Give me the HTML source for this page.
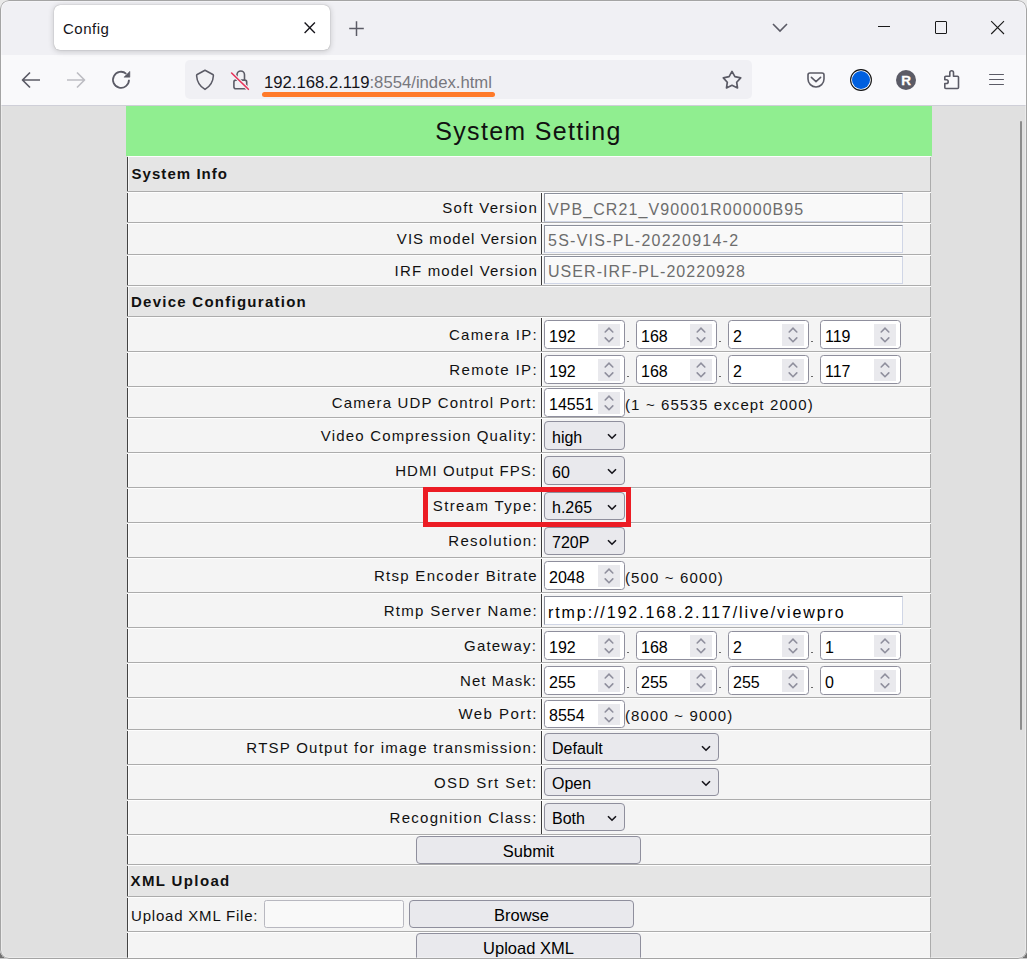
<!DOCTYPE html><html><head><meta charset="utf-8"><style>
html,body{margin:0;padding:0;width:1027px;height:959px;overflow:hidden;background:#e9e9e9;font-family:'Liberation Sans',sans-serif}
#win{position:absolute;left:0;top:0;width:1027px;height:959px;border-radius:9px;overflow:hidden;background:#e0e0e0}
#frame{position:absolute;left:0;top:0;width:1025px;height:957px;border:1px solid #a4a4a4;border-radius:9px;z-index:10;box-shadow:inset 0 0 0 1px rgba(255,255,255,.35)}
svg{position:absolute;overflow:visible}
</style></head><body><div style="position:absolute;left:0;top:948px;width:5px;height:10px;background:#707070"></div><div style="position:absolute;left:1022px;top:948px;width:5px;height:10px;background:#707070"></div><div style="position:absolute;left:0;top:958px;width:1027px;height:1px;background:#c9c9c9"></div><div id="win">
<div style="position:absolute;left:0px;top:0px;width:1027px;height:55px;background:#f0f0f4"></div>
<div style="position:absolute;left:0px;top:55px;width:1027px;height:50px;background:#f9f9fb"></div>
<div style="position:absolute;left:0px;top:105px;width:1027px;height:1px;background:#cfcfd8"></div>
<div style="position:absolute;left:54px;top:5px;width:276px;height:45px;background:#fff;border-radius:6px;box-shadow:0 0 1px rgba(0,0,0,.4),0 1px 6px rgba(0,0,0,.2)"></div>
<div style="position:absolute;top:19px;font-size:15px;line-height:20px;color:#15141a;font-weight:normal;white-space:pre;letter-spacing:0.5px;left:63px;">Config</div>
<svg style="left:303px;top:21px" width="13" height="13" viewBox="0 0 13 13"><path d="M1.6 1.6L11.9 11.9M11.9 1.6L1.6 11.9" stroke="#15141a" stroke-width="1.35" fill="none"/></svg>
<svg style="left:349px;top:21px" width="16" height="16" viewBox="0 0 16 16"><path d="M7.5 0.3V14.9M0.2 7.6H14.8" stroke="#5b5b66" stroke-width="1.5" fill="none"/></svg>
<svg style="left:772px;top:23px" width="17" height="10" viewBox="0 0 17 10"><path d="M1 1L8 8L15 1" stroke="#5b5b66" stroke-width="1.6" fill="none"/></svg>
<div style="position:absolute;left:878px;top:26px;width:12px;height:1px;background:#1a1a1a"></div>
<div style="position:absolute;left:935px;top:21px;width:10px;height:11px;border:1px solid #1a1a1a;border-radius:1px"></div>
<svg style="left:990px;top:20px" width="15" height="15" viewBox="0 0 15 15"><path d="M1.2 1.2L14 14M14 1.2L1.2 14" stroke="#1a1a1a" stroke-width="1.1" fill="none"/></svg>
<svg style="left:21px;top:71px" width="20" height="18" viewBox="0 0 20 18"><path d="M19 9H2.5M9 1.5L1.5 9L9 16.5" stroke="#5b5b66" stroke-width="1.7" fill="none" stroke-linejoin="round"/></svg>
<svg style="left:66px;top:71px" width="20" height="18" viewBox="0 0 20 18"><path d="M1 9H17.5M11 1.5L18.5 9L11 16.5" stroke="#bdbdc3" stroke-width="1.7" fill="none" stroke-linejoin="round"/></svg>
<svg style="left:111px;top:70px" width="21" height="20" viewBox="0 0 21 20"><path d="M18 9.8A8 8 0 1 1 15.3 3.8" stroke="#5b5b66" stroke-width="1.8" fill="none"/><path d="M18.9 1.3L12.9 7.2L18.9 7.2Z" fill="#5b5b66" stroke="#5b5b66" stroke-width=".5" stroke-linejoin="round"/></svg>
<div style="position:absolute;left:185px;top:60px;width:567px;height:39px;background:#f0f0f4;border-radius:5px"></div>
<svg style="left:195px;top:69px" width="20" height="22" viewBox="0 0 20 22"><path d="M10 1.3L2.2 5.5Q1.5 5.9 1.6 6.7C2 13.2 5.2 17.6 10 20.4C14.8 17.6 18 13.2 18.4 6.7Q18.5 5.9 17.8 5.5Z" stroke="#5b5b66" stroke-width="1.55" fill="none" stroke-linejoin="round"/></svg>
<svg style="left:230px;top:69px" width="21" height="22" viewBox="0 0 21 22"><path d="M7 9V5.7A3.75 3.75 0 0 1 14.5 5.7V11.1" stroke="#5b5b66" stroke-width="1.6" fill="none"/><rect x="3.9" y="11.1" width="12.8" height="8.7" rx="2" stroke="#5b5b66" stroke-width="1.6" fill="none"/><path d="M1.6 4L18.4 20.3" stroke="#f0f0f4" stroke-width="3.6"/><path d="M1.6 4L18.4 20.3" stroke="#e8335a" stroke-width="1.6" stroke-linecap="round"/></svg>
<div style="position:absolute;left:264px;top:73px;font-size:16.7px;line-height:20px;white-space:pre;color:#15141a">192.168.2.119<span style="color:#77777d">:8554/index.html</span></div>
<div style="position:absolute;left:262px;top:92px;width:233px;height:5px;background:#ff7a2a;border-radius:3px"></div>
<svg style="left:721px;top:69px" width="22" height="22" viewBox="0 0 22 22"><path d="M11 2.4L13.9 7.6L19.7 8.9L15.7 13.3L16.5 18.9L11 16.3L5.5 18.9L6.3 13.3L2.3 8.9L8.1 7.6Z" stroke="#5b5b66" stroke-width="1.7" fill="none" stroke-linejoin="round"/></svg>
<svg style="left:806px;top:71px" width="20" height="18" viewBox="0 0 20 18"><path d="M4 2H16A2 2 0 0 1 18 4V8A8 8 0 0 1 2 8V4A2 2 0 0 1 4 2Z" stroke="#5b5b66" stroke-width="1.6" fill="none"/><path d="M5.4 6.4L10 10.6L14.6 6.4" stroke="#5b5b66" stroke-width="1.6" fill="none" stroke-linecap="round" stroke-linejoin="round"/></svg>
<svg style="left:850px;top:69px" width="22" height="22" viewBox="0 0 22 22"><circle cx="11" cy="11" r="10.4" stroke="#111" stroke-width="1.1" fill="#fff"/><circle cx="11" cy="11" r="9" fill="#0060df"/></svg>
<div style="position:absolute;left:896px;top:70px;width:20px;height:20px;border-radius:50%;background:#5b5b66"></div>
<div style="position:absolute;left:896px;width:20px;text-align:center;top:71px;font-size:13.5px;line-height:20px;font-weight:bold;color:#fff;-webkit-text-stroke:0.3px #fff">R</div>
<svg style="left:942px;top:69px" width="20" height="22" viewBox="0 0 20 22"><path d="M2.8 10.8V8.3A1 1 0 0 1 3.8 7.3H7.8V3.65A1.85 1.85 0 0 1 11.5 3.65V7.3H15.5A1 1 0 0 1 16.5 8.3V18.5A1 1 0 0 1 15.5 19.5H3.8A1 1 0 0 1 2.8 18.5V14.5H4.35A1.85 1.85 0 0 0 4.35 10.8Z" stroke="#5b5b66" stroke-width="1.6" fill="none" stroke-linejoin="round"/></svg>
<div style="position:absolute;left:989px;top:73.7px;width:14.5px;height:1.6px;background:#5b5b66;border-radius:1px"></div>
<div style="position:absolute;left:989px;top:78.7px;width:14.5px;height:1.6px;background:#5b5b66;border-radius:1px"></div>
<div style="position:absolute;left:989px;top:83.7px;width:14.5px;height:1.6px;background:#5b5b66;border-radius:1px"></div>
<div style="position:absolute;left:0px;top:106px;width:1027px;height:853px;background:#e0e0e0"></div>
<div style="position:absolute;left:1020px;top:121px;width:2px;height:609px;background:#8c8c8c;border-radius:1px"></div>
<div style="position:absolute;left:126px;top:106px;width:806px;height:50px;background:#90ee90"></div>
<div style="position:absolute;left:126px;width:806px;text-align:center;top:116px;font-size:25px;line-height:30px;letter-spacing:1.3px;text-indent:-1px;color:#111">System Setting</div>
<div style="position:absolute;left:127px;top:156px;width:804px;height:35px;background:#e5e5e5"></div>
<div style="position:absolute;left:128px;top:156px;width:803px;height:1px;background:#fdfdfd"></div>
<div style="position:absolute;left:127px;top:157px;width:1px;height:34px;background:#444"></div>
<div style="position:absolute;left:128px;top:157px;width:1px;height:34px;background:#f6f6f6"></div>
<div style="position:absolute;left:930px;top:157px;width:1px;height:35px;background:#acacac"></div>
<div style="position:absolute;left:127px;top:191px;width:804px;height:1px;background:#acacac"></div>
<div style="position:absolute;top:164px;font-size:15px;line-height:20px;color:#111;font-weight:bold;white-space:pre;letter-spacing:1.05px;left:131.5px;">System Info</div>
<div style="position:absolute;left:127px;top:192px;width:804px;height:30px;background:#f4f4f4"></div>
<div style="position:absolute;left:128px;top:192px;width:803px;height:1px;background:#fdfdfd"></div>
<div style="position:absolute;left:127px;top:193px;width:1px;height:29px;background:#444"></div>
<div style="position:absolute;left:128px;top:193px;width:1px;height:29px;background:#fbfbfb"></div>
<div style="position:absolute;left:930px;top:193px;width:1px;height:30px;background:#acacac"></div>
<div style="position:absolute;left:127px;top:222px;width:804px;height:1px;background:#acacac"></div>
<div style="position:absolute;left:541px;top:193px;width:1px;height:29px;background:#3a3a3a"></div>
<div style="position:absolute;left:542px;top:193px;width:1px;height:29px;background:#fdfdfd"></div>
<div style="position:absolute;top:198px;font-size:15px;line-height:20px;color:#111;font-weight:normal;white-space:pre;letter-spacing:1.233px;right:489.0px;text-align:right;">Soft Version</div>
<div style="position:absolute;left:544px;top:193px;width:359px;height:29px;background:#f9f9f9;border-top:1px solid #8b8f9b;border-left:1px solid #8b8f9b;border-right:1px solid #d0d6e6;border-bottom:1px solid #d0d6e6;box-sizing:border-box;box-shadow:inset 0 1px 0 #fff"></div>
<div style="position:absolute;top:200px;font-size:16px;line-height:20px;color:#6d6d6d;font-weight:normal;white-space:pre;letter-spacing:1.08px;left:548px;">VPB_CR21_V90001R00000B95</div>
<div style="position:absolute;left:127px;top:223px;width:804px;height:31px;background:#f4f4f4"></div>
<div style="position:absolute;left:128px;top:223px;width:803px;height:1px;background:#fdfdfd"></div>
<div style="position:absolute;left:127px;top:224px;width:1px;height:30px;background:#444"></div>
<div style="position:absolute;left:128px;top:224px;width:1px;height:30px;background:#fbfbfb"></div>
<div style="position:absolute;left:930px;top:224px;width:1px;height:31px;background:#acacac"></div>
<div style="position:absolute;left:127px;top:254px;width:804px;height:1px;background:#acacac"></div>
<div style="position:absolute;left:541px;top:224px;width:1px;height:30px;background:#3a3a3a"></div>
<div style="position:absolute;left:542px;top:224px;width:1px;height:30px;background:#fdfdfd"></div>
<div style="position:absolute;top:229px;font-size:15px;line-height:20px;color:#111;font-weight:normal;white-space:pre;letter-spacing:1.044px;right:489.0px;text-align:right;">VIS model Version</div>
<div style="position:absolute;left:544px;top:225px;width:359px;height:28px;background:#f9f9f9;border-top:1px solid #8b8f9b;border-left:1px solid #8b8f9b;border-right:1px solid #d0d6e6;border-bottom:1px solid #d0d6e6;box-sizing:border-box;box-shadow:inset 0 1px 0 #fff"></div>
<div style="position:absolute;top:231px;font-size:16px;line-height:20px;color:#6d6d6d;font-weight:normal;white-space:pre;letter-spacing:1.25px;left:548px;">5S-VIS-PL-20220914-2</div>
<div style="position:absolute;left:127px;top:255px;width:804px;height:30px;background:#f4f4f4"></div>
<div style="position:absolute;left:128px;top:255px;width:803px;height:1px;background:#fdfdfd"></div>
<div style="position:absolute;left:127px;top:256px;width:1px;height:29px;background:#444"></div>
<div style="position:absolute;left:128px;top:256px;width:1px;height:29px;background:#fbfbfb"></div>
<div style="position:absolute;left:930px;top:256px;width:1px;height:30px;background:#acacac"></div>
<div style="position:absolute;left:127px;top:285px;width:804px;height:1px;background:#acacac"></div>
<div style="position:absolute;left:541px;top:256px;width:1px;height:29px;background:#3a3a3a"></div>
<div style="position:absolute;left:542px;top:256px;width:1px;height:29px;background:#fdfdfd"></div>
<div style="position:absolute;top:261px;font-size:15px;line-height:20px;color:#111;font-weight:normal;white-space:pre;letter-spacing:1.176px;right:489.0px;text-align:right;">IRF model Version</div>
<div style="position:absolute;left:544px;top:256px;width:359px;height:28px;background:#f9f9f9;border-top:1px solid #8b8f9b;border-left:1px solid #8b8f9b;border-right:1px solid #d0d6e6;border-bottom:1px solid #d0d6e6;box-sizing:border-box;box-shadow:inset 0 1px 0 #fff"></div>
<div style="position:absolute;top:262px;font-size:16px;line-height:20px;color:#6d6d6d;font-weight:normal;white-space:pre;letter-spacing:1.05px;left:548px;">USER-IRF-PL-20220928</div>
<div style="position:absolute;left:127px;top:286px;width:804px;height:30px;background:#e5e5e5"></div>
<div style="position:absolute;left:128px;top:286px;width:803px;height:1px;background:#fdfdfd"></div>
<div style="position:absolute;left:127px;top:287px;width:1px;height:29px;background:#444"></div>
<div style="position:absolute;left:128px;top:287px;width:1px;height:29px;background:#f6f6f6"></div>
<div style="position:absolute;left:930px;top:287px;width:1px;height:30px;background:#acacac"></div>
<div style="position:absolute;left:127px;top:316px;width:804px;height:1px;background:#acacac"></div>
<div style="position:absolute;top:292px;font-size:15px;line-height:20px;color:#111;font-weight:bold;white-space:pre;letter-spacing:1.258px;left:131px;">Device Configuration</div>
<div style="position:absolute;left:127px;top:317px;width:804px;height:34px;background:#f4f4f4"></div>
<div style="position:absolute;left:128px;top:317px;width:803px;height:1px;background:#fdfdfd"></div>
<div style="position:absolute;left:127px;top:318px;width:1px;height:33px;background:#444"></div>
<div style="position:absolute;left:128px;top:318px;width:1px;height:33px;background:#fbfbfb"></div>
<div style="position:absolute;left:930px;top:318px;width:1px;height:34px;background:#acacac"></div>
<div style="position:absolute;left:127px;top:351px;width:804px;height:1px;background:#acacac"></div>
<div style="position:absolute;left:541px;top:318px;width:1px;height:33px;background:#3a3a3a"></div>
<div style="position:absolute;left:542px;top:318px;width:1px;height:33px;background:#fdfdfd"></div>
<div style="position:absolute;top:325px;font-size:15px;line-height:20px;color:#111;font-weight:normal;white-space:pre;letter-spacing:1.326px;right:489.0px;text-align:right;">Camera IP:</div>
<div style="position:absolute;left:544px;top:320px;width:79px;height:27px;background:#fff;border:1px solid #8f8f9d;border-radius:3.5px"></div>
<div style="position:absolute;left:598px;top:324px;width:22px;height:22px;background:#e9e9ed"></div>
<svg style="left:604px;top:327.0px" width="10" height="16" viewBox="0 0 10 16"><path d="M1.2 5L5 1.2L8.8 5M1.2 10.9L5 14.7L8.8 10.9" stroke="#8f8f9d" stroke-width="1.6" fill="none" stroke-linecap="round"/></svg>
<div style="position:absolute;top:327px;font-size:16px;line-height:20px;color:#000;font-weight:normal;white-space:pre;left:549px;">192</div>
<div style="position:absolute;left:627px;top:340.7px;width:1.6px;height:1.6px;background:#6a6a6a"></div>
<div style="position:absolute;left:636px;top:320px;width:79px;height:27px;background:#fff;border:1px solid #8f8f9d;border-radius:3.5px"></div>
<div style="position:absolute;left:690px;top:324px;width:22px;height:22px;background:#e9e9ed"></div>
<svg style="left:696px;top:327.0px" width="10" height="16" viewBox="0 0 10 16"><path d="M1.2 5L5 1.2L8.8 5M1.2 10.9L5 14.7L8.8 10.9" stroke="#8f8f9d" stroke-width="1.6" fill="none" stroke-linecap="round"/></svg>
<div style="position:absolute;top:327px;font-size:16px;line-height:20px;color:#000;font-weight:normal;white-space:pre;left:641px;">168</div>
<div style="position:absolute;left:719px;top:340.7px;width:1.6px;height:1.6px;background:#6a6a6a"></div>
<div style="position:absolute;left:728px;top:320px;width:79px;height:27px;background:#fff;border:1px solid #8f8f9d;border-radius:3.5px"></div>
<div style="position:absolute;left:782px;top:324px;width:22px;height:22px;background:#e9e9ed"></div>
<svg style="left:788px;top:327.0px" width="10" height="16" viewBox="0 0 10 16"><path d="M1.2 5L5 1.2L8.8 5M1.2 10.9L5 14.7L8.8 10.9" stroke="#8f8f9d" stroke-width="1.6" fill="none" stroke-linecap="round"/></svg>
<div style="position:absolute;top:327px;font-size:16px;line-height:20px;color:#000;font-weight:normal;white-space:pre;left:733px;">2</div>
<div style="position:absolute;left:811px;top:340.7px;width:1.6px;height:1.6px;background:#6a6a6a"></div>
<div style="position:absolute;left:820px;top:320px;width:79px;height:27px;background:#fff;border:1px solid #8f8f9d;border-radius:3.5px"></div>
<div style="position:absolute;left:874px;top:324px;width:22px;height:22px;background:#e9e9ed"></div>
<svg style="left:880px;top:327.0px" width="10" height="16" viewBox="0 0 10 16"><path d="M1.2 5L5 1.2L8.8 5M1.2 10.9L5 14.7L8.8 10.9" stroke="#8f8f9d" stroke-width="1.6" fill="none" stroke-linecap="round"/></svg>
<div style="position:absolute;top:327px;font-size:16px;line-height:20px;color:#000;font-weight:normal;white-space:pre;left:825px;">119</div>
<div style="position:absolute;left:127px;top:352px;width:804px;height:34px;background:#f4f4f4"></div>
<div style="position:absolute;left:128px;top:352px;width:803px;height:1px;background:#fdfdfd"></div>
<div style="position:absolute;left:127px;top:353px;width:1px;height:33px;background:#444"></div>
<div style="position:absolute;left:128px;top:353px;width:1px;height:33px;background:#fbfbfb"></div>
<div style="position:absolute;left:930px;top:353px;width:1px;height:34px;background:#acacac"></div>
<div style="position:absolute;left:127px;top:386px;width:804px;height:1px;background:#acacac"></div>
<div style="position:absolute;left:541px;top:353px;width:1px;height:33px;background:#3a3a3a"></div>
<div style="position:absolute;left:542px;top:353px;width:1px;height:33px;background:#fdfdfd"></div>
<div style="position:absolute;top:360px;font-size:15px;line-height:20px;color:#111;font-weight:normal;white-space:pre;letter-spacing:1.37px;right:489.0px;text-align:right;">Remote IP:</div>
<div style="position:absolute;left:544px;top:355px;width:79px;height:27px;background:#fff;border:1px solid #8f8f9d;border-radius:3.5px"></div>
<div style="position:absolute;left:598px;top:359px;width:22px;height:22px;background:#e9e9ed"></div>
<svg style="left:604px;top:362.0px" width="10" height="16" viewBox="0 0 10 16"><path d="M1.2 5L5 1.2L8.8 5M1.2 10.9L5 14.7L8.8 10.9" stroke="#8f8f9d" stroke-width="1.6" fill="none" stroke-linecap="round"/></svg>
<div style="position:absolute;top:362px;font-size:16px;line-height:20px;color:#000;font-weight:normal;white-space:pre;left:549px;">192</div>
<div style="position:absolute;left:627px;top:375.7px;width:1.6px;height:1.6px;background:#6a6a6a"></div>
<div style="position:absolute;left:636px;top:355px;width:79px;height:27px;background:#fff;border:1px solid #8f8f9d;border-radius:3.5px"></div>
<div style="position:absolute;left:690px;top:359px;width:22px;height:22px;background:#e9e9ed"></div>
<svg style="left:696px;top:362.0px" width="10" height="16" viewBox="0 0 10 16"><path d="M1.2 5L5 1.2L8.8 5M1.2 10.9L5 14.7L8.8 10.9" stroke="#8f8f9d" stroke-width="1.6" fill="none" stroke-linecap="round"/></svg>
<div style="position:absolute;top:362px;font-size:16px;line-height:20px;color:#000;font-weight:normal;white-space:pre;left:641px;">168</div>
<div style="position:absolute;left:719px;top:375.7px;width:1.6px;height:1.6px;background:#6a6a6a"></div>
<div style="position:absolute;left:728px;top:355px;width:79px;height:27px;background:#fff;border:1px solid #8f8f9d;border-radius:3.5px"></div>
<div style="position:absolute;left:782px;top:359px;width:22px;height:22px;background:#e9e9ed"></div>
<svg style="left:788px;top:362.0px" width="10" height="16" viewBox="0 0 10 16"><path d="M1.2 5L5 1.2L8.8 5M1.2 10.9L5 14.7L8.8 10.9" stroke="#8f8f9d" stroke-width="1.6" fill="none" stroke-linecap="round"/></svg>
<div style="position:absolute;top:362px;font-size:16px;line-height:20px;color:#000;font-weight:normal;white-space:pre;left:733px;">2</div>
<div style="position:absolute;left:811px;top:375.7px;width:1.6px;height:1.6px;background:#6a6a6a"></div>
<div style="position:absolute;left:820px;top:355px;width:79px;height:27px;background:#fff;border:1px solid #8f8f9d;border-radius:3.5px"></div>
<div style="position:absolute;left:874px;top:359px;width:22px;height:22px;background:#e9e9ed"></div>
<svg style="left:880px;top:362.0px" width="10" height="16" viewBox="0 0 10 16"><path d="M1.2 5L5 1.2L8.8 5M1.2 10.9L5 14.7L8.8 10.9" stroke="#8f8f9d" stroke-width="1.6" fill="none" stroke-linecap="round"/></svg>
<div style="position:absolute;top:362px;font-size:16px;line-height:20px;color:#000;font-weight:normal;white-space:pre;left:825px;">117</div>
<div style="position:absolute;left:127px;top:387px;width:804px;height:30px;background:#f4f4f4"></div>
<div style="position:absolute;left:128px;top:387px;width:803px;height:1px;background:#fdfdfd"></div>
<div style="position:absolute;left:127px;top:388px;width:1px;height:29px;background:#444"></div>
<div style="position:absolute;left:128px;top:388px;width:1px;height:29px;background:#fbfbfb"></div>
<div style="position:absolute;left:930px;top:388px;width:1px;height:30px;background:#acacac"></div>
<div style="position:absolute;left:127px;top:417px;width:804px;height:1px;background:#acacac"></div>
<div style="position:absolute;left:541px;top:388px;width:1px;height:29px;background:#3a3a3a"></div>
<div style="position:absolute;left:542px;top:388px;width:1px;height:29px;background:#fdfdfd"></div>
<div style="position:absolute;top:393px;font-size:15px;line-height:20px;color:#111;font-weight:normal;white-space:pre;letter-spacing:1.161px;right:490.0px;text-align:right;">Camera UDP Control Port:</div>
<div style="position:absolute;left:544px;top:388px;width:79px;height:27px;background:#fff;border:1px solid #8f8f9d;border-radius:3.5px"></div>
<div style="position:absolute;left:598px;top:392px;width:22px;height:22px;background:#e9e9ed"></div>
<svg style="left:604px;top:395.0px" width="10" height="16" viewBox="0 0 10 16"><path d="M1.2 5L5 1.2L8.8 5M1.2 10.9L5 14.7L8.8 10.9" stroke="#8f8f9d" stroke-width="1.6" fill="none" stroke-linecap="round"/></svg>
<div style="position:absolute;top:395px;font-size:16px;line-height:20px;color:#000;font-weight:normal;white-space:pre;left:549px;">14551</div>
<div style="position:absolute;top:395px;font-size:15px;line-height:20px;color:#111;font-weight:normal;white-space:pre;letter-spacing:1.125px;left:625px;">(1 ~ 65535 except 2000)</div>
<div style="position:absolute;left:127px;top:418px;width:804px;height:34px;background:#f4f4f4"></div>
<div style="position:absolute;left:128px;top:418px;width:803px;height:1px;background:#fdfdfd"></div>
<div style="position:absolute;left:127px;top:419px;width:1px;height:33px;background:#444"></div>
<div style="position:absolute;left:128px;top:419px;width:1px;height:33px;background:#fbfbfb"></div>
<div style="position:absolute;left:930px;top:419px;width:1px;height:34px;background:#acacac"></div>
<div style="position:absolute;left:127px;top:452px;width:804px;height:1px;background:#acacac"></div>
<div style="position:absolute;left:541px;top:419px;width:1px;height:33px;background:#3a3a3a"></div>
<div style="position:absolute;left:542px;top:419px;width:1px;height:33px;background:#fdfdfd"></div>
<div style="position:absolute;top:426px;font-size:15px;line-height:20px;color:#111;font-weight:normal;white-space:pre;letter-spacing:1.173px;right:490.0px;text-align:right;">Video Compression Quality:</div>
<div style="position:absolute;left:544px;top:421px;width:79px;height:27px;background:#e9e9ed;border:1px solid #8f8f9d;border-radius:4px"></div>
<div style="position:absolute;top:428px;font-size:16px;line-height:20px;color:#000;font-weight:normal;white-space:pre;left:552px;">high</div>
<svg style="left:607px;top:433.0px" width="10" height="7" viewBox="0 0 10 7"><path d="M1 1.2L5 5.2L9 1.2" stroke="#15141a" stroke-width="1.6" fill="none"/></svg>
<div style="position:absolute;left:127px;top:453px;width:804px;height:34px;background:#f4f4f4"></div>
<div style="position:absolute;left:128px;top:453px;width:803px;height:1px;background:#fdfdfd"></div>
<div style="position:absolute;left:127px;top:454px;width:1px;height:33px;background:#444"></div>
<div style="position:absolute;left:128px;top:454px;width:1px;height:33px;background:#fbfbfb"></div>
<div style="position:absolute;left:930px;top:454px;width:1px;height:34px;background:#acacac"></div>
<div style="position:absolute;left:127px;top:487px;width:804px;height:1px;background:#acacac"></div>
<div style="position:absolute;left:541px;top:454px;width:1px;height:33px;background:#3a3a3a"></div>
<div style="position:absolute;left:542px;top:454px;width:1px;height:33px;background:#fdfdfd"></div>
<div style="position:absolute;top:461px;font-size:15px;line-height:20px;color:#111;font-weight:normal;white-space:pre;letter-spacing:1.045px;right:490.0px;text-align:right;">HDMI Output FPS:</div>
<div style="position:absolute;left:544px;top:456px;width:79px;height:27px;background:#e9e9ed;border:1px solid #8f8f9d;border-radius:4px"></div>
<div style="position:absolute;top:463px;font-size:16px;line-height:20px;color:#000;font-weight:normal;white-space:pre;left:552px;">60</div>
<svg style="left:607px;top:468.0px" width="10" height="7" viewBox="0 0 10 7"><path d="M1 1.2L5 5.2L9 1.2" stroke="#15141a" stroke-width="1.6" fill="none"/></svg>
<div style="position:absolute;left:127px;top:488px;width:804px;height:34px;background:#f4f4f4"></div>
<div style="position:absolute;left:128px;top:488px;width:803px;height:1px;background:#fdfdfd"></div>
<div style="position:absolute;left:127px;top:489px;width:1px;height:33px;background:#444"></div>
<div style="position:absolute;left:128px;top:489px;width:1px;height:33px;background:#fbfbfb"></div>
<div style="position:absolute;left:930px;top:489px;width:1px;height:34px;background:#acacac"></div>
<div style="position:absolute;left:127px;top:522px;width:804px;height:1px;background:#acacac"></div>
<div style="position:absolute;left:541px;top:489px;width:1px;height:33px;background:#3a3a3a"></div>
<div style="position:absolute;left:542px;top:489px;width:1px;height:33px;background:#fdfdfd"></div>
<div style="position:absolute;top:496px;font-size:15px;line-height:20px;color:#111;font-weight:normal;white-space:pre;letter-spacing:1.351px;right:489.0px;text-align:right;">Stream Type:</div>
<div style="position:absolute;left:544px;top:492px;width:79px;height:26px;background:#e9e9ed;border:1px solid #8f8f9d;border-radius:4px"></div>
<div style="position:absolute;top:498px;font-size:16px;line-height:20px;color:#000;font-weight:normal;white-space:pre;left:552px;">h.265</div>
<svg style="left:607px;top:503.5px" width="10" height="7" viewBox="0 0 10 7"><path d="M1 1.2L5 5.2L9 1.2" stroke="#15141a" stroke-width="1.6" fill="none"/></svg>
<div style="position:absolute;left:127px;top:523px;width:804px;height:34px;background:#f4f4f4"></div>
<div style="position:absolute;left:128px;top:523px;width:803px;height:1px;background:#fdfdfd"></div>
<div style="position:absolute;left:127px;top:524px;width:1px;height:33px;background:#444"></div>
<div style="position:absolute;left:128px;top:524px;width:1px;height:33px;background:#fbfbfb"></div>
<div style="position:absolute;left:930px;top:524px;width:1px;height:34px;background:#acacac"></div>
<div style="position:absolute;left:127px;top:557px;width:804px;height:1px;background:#acacac"></div>
<div style="position:absolute;left:541px;top:524px;width:1px;height:33px;background:#3a3a3a"></div>
<div style="position:absolute;left:542px;top:524px;width:1px;height:33px;background:#fdfdfd"></div>
<div style="position:absolute;top:531px;font-size:15px;line-height:20px;color:#111;font-weight:normal;white-space:pre;letter-spacing:1.335px;right:489.0px;text-align:right;">Resolution:</div>
<div style="position:absolute;left:544px;top:527px;width:79px;height:26px;background:#e9e9ed;border:1px solid #8f8f9d;border-radius:4px"></div>
<div style="position:absolute;top:533px;font-size:16px;line-height:20px;color:#000;font-weight:normal;white-space:pre;left:552px;">720P</div>
<svg style="left:607px;top:538.5px" width="10" height="7" viewBox="0 0 10 7"><path d="M1 1.2L5 5.2L9 1.2" stroke="#15141a" stroke-width="1.6" fill="none"/></svg>
<div style="position:absolute;left:127px;top:558px;width:804px;height:34px;background:#f4f4f4"></div>
<div style="position:absolute;left:128px;top:558px;width:803px;height:1px;background:#fdfdfd"></div>
<div style="position:absolute;left:127px;top:559px;width:1px;height:33px;background:#444"></div>
<div style="position:absolute;left:128px;top:559px;width:1px;height:33px;background:#fbfbfb"></div>
<div style="position:absolute;left:930px;top:559px;width:1px;height:34px;background:#acacac"></div>
<div style="position:absolute;left:127px;top:592px;width:804px;height:1px;background:#acacac"></div>
<div style="position:absolute;left:541px;top:559px;width:1px;height:33px;background:#3a3a3a"></div>
<div style="position:absolute;left:542px;top:559px;width:1px;height:33px;background:#fdfdfd"></div>
<div style="position:absolute;top:566px;font-size:15px;line-height:20px;color:#111;font-weight:normal;white-space:pre;letter-spacing:1.283px;right:489.0px;text-align:right;">Rtsp Encoder Bitrate</div>
<div style="position:absolute;left:544px;top:561px;width:79px;height:27px;background:#fff;border:1px solid #8f8f9d;border-radius:3.5px"></div>
<div style="position:absolute;left:598px;top:565px;width:22px;height:22px;background:#e9e9ed"></div>
<svg style="left:604px;top:568.0px" width="10" height="16" viewBox="0 0 10 16"><path d="M1.2 5L5 1.2L8.8 5M1.2 10.9L5 14.7L8.8 10.9" stroke="#8f8f9d" stroke-width="1.6" fill="none" stroke-linecap="round"/></svg>
<div style="position:absolute;top:568px;font-size:16px;line-height:20px;color:#000;font-weight:normal;white-space:pre;left:549px;">2048</div>
<div style="position:absolute;top:568px;font-size:15px;line-height:20px;color:#111;font-weight:normal;white-space:pre;letter-spacing:1.125px;left:625px;">(500 ~ 6000)</div>
<div style="position:absolute;left:127px;top:593px;width:804px;height:34px;background:#f4f4f4"></div>
<div style="position:absolute;left:128px;top:593px;width:803px;height:1px;background:#fdfdfd"></div>
<div style="position:absolute;left:127px;top:594px;width:1px;height:33px;background:#444"></div>
<div style="position:absolute;left:128px;top:594px;width:1px;height:33px;background:#fbfbfb"></div>
<div style="position:absolute;left:930px;top:594px;width:1px;height:34px;background:#acacac"></div>
<div style="position:absolute;left:127px;top:627px;width:804px;height:1px;background:#acacac"></div>
<div style="position:absolute;left:541px;top:594px;width:1px;height:33px;background:#3a3a3a"></div>
<div style="position:absolute;left:542px;top:594px;width:1px;height:33px;background:#fdfdfd"></div>
<div style="position:absolute;top:601px;font-size:15px;line-height:20px;color:#111;font-weight:normal;white-space:pre;letter-spacing:1.276px;right:489.0px;text-align:right;">Rtmp Server Name:</div>
<div style="position:absolute;left:544px;top:596px;width:359px;height:29px;background:#fff;border-top:1px solid #8b8f9b;border-left:1px solid #8b8f9b;border-right:1px solid #d0d6e6;border-bottom:1px solid #d0d6e6;box-sizing:border-box"></div>
<div style="position:absolute;top:603px;font-size:16px;line-height:20px;color:#000;font-weight:normal;white-space:pre;letter-spacing:1.91px;left:548px;">rtmp://192.168.2.117/live/viewpro</div>
<div style="position:absolute;left:127px;top:628px;width:804px;height:34px;background:#f4f4f4"></div>
<div style="position:absolute;left:128px;top:628px;width:803px;height:1px;background:#fdfdfd"></div>
<div style="position:absolute;left:127px;top:629px;width:1px;height:33px;background:#444"></div>
<div style="position:absolute;left:128px;top:629px;width:1px;height:33px;background:#fbfbfb"></div>
<div style="position:absolute;left:930px;top:629px;width:1px;height:34px;background:#acacac"></div>
<div style="position:absolute;left:127px;top:662px;width:804px;height:1px;background:#acacac"></div>
<div style="position:absolute;left:541px;top:629px;width:1px;height:33px;background:#3a3a3a"></div>
<div style="position:absolute;left:542px;top:629px;width:1px;height:33px;background:#fdfdfd"></div>
<div style="position:absolute;top:636px;font-size:15px;line-height:20px;color:#111;font-weight:normal;white-space:pre;letter-spacing:1.196px;right:490.0px;text-align:right;">Gateway:</div>
<div style="position:absolute;left:544px;top:631px;width:79px;height:27px;background:#fff;border:1px solid #8f8f9d;border-radius:3.5px"></div>
<div style="position:absolute;left:598px;top:635px;width:22px;height:22px;background:#e9e9ed"></div>
<svg style="left:604px;top:638.0px" width="10" height="16" viewBox="0 0 10 16"><path d="M1.2 5L5 1.2L8.8 5M1.2 10.9L5 14.7L8.8 10.9" stroke="#8f8f9d" stroke-width="1.6" fill="none" stroke-linecap="round"/></svg>
<div style="position:absolute;top:638px;font-size:16px;line-height:20px;color:#000;font-weight:normal;white-space:pre;left:549px;">192</div>
<div style="position:absolute;left:627px;top:651.7px;width:1.6px;height:1.6px;background:#6a6a6a"></div>
<div style="position:absolute;left:636px;top:631px;width:79px;height:27px;background:#fff;border:1px solid #8f8f9d;border-radius:3.5px"></div>
<div style="position:absolute;left:690px;top:635px;width:22px;height:22px;background:#e9e9ed"></div>
<svg style="left:696px;top:638.0px" width="10" height="16" viewBox="0 0 10 16"><path d="M1.2 5L5 1.2L8.8 5M1.2 10.9L5 14.7L8.8 10.9" stroke="#8f8f9d" stroke-width="1.6" fill="none" stroke-linecap="round"/></svg>
<div style="position:absolute;top:638px;font-size:16px;line-height:20px;color:#000;font-weight:normal;white-space:pre;left:641px;">168</div>
<div style="position:absolute;left:719px;top:651.7px;width:1.6px;height:1.6px;background:#6a6a6a"></div>
<div style="position:absolute;left:728px;top:631px;width:79px;height:27px;background:#fff;border:1px solid #8f8f9d;border-radius:3.5px"></div>
<div style="position:absolute;left:782px;top:635px;width:22px;height:22px;background:#e9e9ed"></div>
<svg style="left:788px;top:638.0px" width="10" height="16" viewBox="0 0 10 16"><path d="M1.2 5L5 1.2L8.8 5M1.2 10.9L5 14.7L8.8 10.9" stroke="#8f8f9d" stroke-width="1.6" fill="none" stroke-linecap="round"/></svg>
<div style="position:absolute;top:638px;font-size:16px;line-height:20px;color:#000;font-weight:normal;white-space:pre;left:733px;">2</div>
<div style="position:absolute;left:811px;top:651.7px;width:1.6px;height:1.6px;background:#6a6a6a"></div>
<div style="position:absolute;left:820px;top:631px;width:79px;height:27px;background:#fff;border:1px solid #8f8f9d;border-radius:3.5px"></div>
<div style="position:absolute;left:874px;top:635px;width:22px;height:22px;background:#e9e9ed"></div>
<svg style="left:880px;top:638.0px" width="10" height="16" viewBox="0 0 10 16"><path d="M1.2 5L5 1.2L8.8 5M1.2 10.9L5 14.7L8.8 10.9" stroke="#8f8f9d" stroke-width="1.6" fill="none" stroke-linecap="round"/></svg>
<div style="position:absolute;top:638px;font-size:16px;line-height:20px;color:#000;font-weight:normal;white-space:pre;left:825px;">1</div>
<div style="position:absolute;left:127px;top:663px;width:804px;height:34px;background:#f4f4f4"></div>
<div style="position:absolute;left:128px;top:663px;width:803px;height:1px;background:#fdfdfd"></div>
<div style="position:absolute;left:127px;top:664px;width:1px;height:33px;background:#444"></div>
<div style="position:absolute;left:128px;top:664px;width:1px;height:33px;background:#fbfbfb"></div>
<div style="position:absolute;left:930px;top:664px;width:1px;height:34px;background:#acacac"></div>
<div style="position:absolute;left:127px;top:697px;width:804px;height:1px;background:#acacac"></div>
<div style="position:absolute;left:541px;top:664px;width:1px;height:33px;background:#3a3a3a"></div>
<div style="position:absolute;left:542px;top:664px;width:1px;height:33px;background:#fdfdfd"></div>
<div style="position:absolute;top:671px;font-size:15px;line-height:20px;color:#111;font-weight:normal;white-space:pre;letter-spacing:1.05px;right:490.0px;text-align:right;">Net Mask:</div>
<div style="position:absolute;left:544px;top:666px;width:79px;height:27px;background:#fff;border:1px solid #8f8f9d;border-radius:3.5px"></div>
<div style="position:absolute;left:598px;top:670px;width:22px;height:22px;background:#e9e9ed"></div>
<svg style="left:604px;top:673.0px" width="10" height="16" viewBox="0 0 10 16"><path d="M1.2 5L5 1.2L8.8 5M1.2 10.9L5 14.7L8.8 10.9" stroke="#8f8f9d" stroke-width="1.6" fill="none" stroke-linecap="round"/></svg>
<div style="position:absolute;top:673px;font-size:16px;line-height:20px;color:#000;font-weight:normal;white-space:pre;left:549px;">255</div>
<div style="position:absolute;left:627px;top:686.7px;width:1.6px;height:1.6px;background:#6a6a6a"></div>
<div style="position:absolute;left:636px;top:666px;width:79px;height:27px;background:#fff;border:1px solid #8f8f9d;border-radius:3.5px"></div>
<div style="position:absolute;left:690px;top:670px;width:22px;height:22px;background:#e9e9ed"></div>
<svg style="left:696px;top:673.0px" width="10" height="16" viewBox="0 0 10 16"><path d="M1.2 5L5 1.2L8.8 5M1.2 10.9L5 14.7L8.8 10.9" stroke="#8f8f9d" stroke-width="1.6" fill="none" stroke-linecap="round"/></svg>
<div style="position:absolute;top:673px;font-size:16px;line-height:20px;color:#000;font-weight:normal;white-space:pre;left:641px;">255</div>
<div style="position:absolute;left:719px;top:686.7px;width:1.6px;height:1.6px;background:#6a6a6a"></div>
<div style="position:absolute;left:728px;top:666px;width:79px;height:27px;background:#fff;border:1px solid #8f8f9d;border-radius:3.5px"></div>
<div style="position:absolute;left:782px;top:670px;width:22px;height:22px;background:#e9e9ed"></div>
<svg style="left:788px;top:673.0px" width="10" height="16" viewBox="0 0 10 16"><path d="M1.2 5L5 1.2L8.8 5M1.2 10.9L5 14.7L8.8 10.9" stroke="#8f8f9d" stroke-width="1.6" fill="none" stroke-linecap="round"/></svg>
<div style="position:absolute;top:673px;font-size:16px;line-height:20px;color:#000;font-weight:normal;white-space:pre;left:733px;">255</div>
<div style="position:absolute;left:811px;top:686.7px;width:1.6px;height:1.6px;background:#6a6a6a"></div>
<div style="position:absolute;left:820px;top:666px;width:79px;height:27px;background:#fff;border:1px solid #8f8f9d;border-radius:3.5px"></div>
<div style="position:absolute;left:874px;top:670px;width:22px;height:22px;background:#e9e9ed"></div>
<svg style="left:880px;top:673.0px" width="10" height="16" viewBox="0 0 10 16"><path d="M1.2 5L5 1.2L8.8 5M1.2 10.9L5 14.7L8.8 10.9" stroke="#8f8f9d" stroke-width="1.6" fill="none" stroke-linecap="round"/></svg>
<div style="position:absolute;top:673px;font-size:16px;line-height:20px;color:#000;font-weight:normal;white-space:pre;left:825px;">0</div>
<div style="position:absolute;left:127px;top:698px;width:804px;height:31px;background:#f4f4f4"></div>
<div style="position:absolute;left:128px;top:698px;width:803px;height:1px;background:#fdfdfd"></div>
<div style="position:absolute;left:127px;top:699px;width:1px;height:30px;background:#444"></div>
<div style="position:absolute;left:128px;top:699px;width:1px;height:30px;background:#fbfbfb"></div>
<div style="position:absolute;left:930px;top:699px;width:1px;height:31px;background:#acacac"></div>
<div style="position:absolute;left:127px;top:729px;width:804px;height:1px;background:#acacac"></div>
<div style="position:absolute;left:541px;top:699px;width:1px;height:30px;background:#3a3a3a"></div>
<div style="position:absolute;left:542px;top:699px;width:1px;height:30px;background:#fdfdfd"></div>
<div style="position:absolute;top:704px;font-size:15px;line-height:20px;color:#111;font-weight:normal;white-space:pre;letter-spacing:1.461px;right:489.0px;text-align:right;">Web Port:</div>
<div style="position:absolute;left:544px;top:700px;width:79px;height:26px;background:#fff;border:1px solid #8f8f9d;border-radius:3.5px"></div>
<div style="position:absolute;left:598px;top:704px;width:22px;height:21px;background:#e9e9ed"></div>
<svg style="left:604px;top:706.5px" width="10" height="16" viewBox="0 0 10 16"><path d="M1.2 5L5 1.2L8.8 5M1.2 10.9L5 14.7L8.8 10.9" stroke="#8f8f9d" stroke-width="1.6" fill="none" stroke-linecap="round"/></svg>
<div style="position:absolute;top:706px;font-size:16px;line-height:20px;color:#000;font-weight:normal;white-space:pre;left:549px;">8554</div>
<div style="position:absolute;top:706px;font-size:15px;line-height:20px;color:#111;font-weight:normal;white-space:pre;letter-spacing:1.125px;left:625px;">(8000 ~ 9000)</div>
<div style="position:absolute;left:127px;top:730px;width:804px;height:34px;background:#f4f4f4"></div>
<div style="position:absolute;left:128px;top:730px;width:803px;height:1px;background:#fdfdfd"></div>
<div style="position:absolute;left:127px;top:731px;width:1px;height:33px;background:#444"></div>
<div style="position:absolute;left:128px;top:731px;width:1px;height:33px;background:#fbfbfb"></div>
<div style="position:absolute;left:930px;top:731px;width:1px;height:34px;background:#acacac"></div>
<div style="position:absolute;left:127px;top:764px;width:804px;height:1px;background:#acacac"></div>
<div style="position:absolute;left:541px;top:731px;width:1px;height:33px;background:#3a3a3a"></div>
<div style="position:absolute;left:542px;top:731px;width:1px;height:33px;background:#fdfdfd"></div>
<div style="position:absolute;top:738px;font-size:15px;line-height:20px;color:#111;font-weight:normal;white-space:pre;letter-spacing:1.239px;right:489.4px;text-align:right;">RTSP Output for image transmission:</div>
<div style="position:absolute;left:544px;top:733px;width:173px;height:26px;background:#e9e9ed;border:1px solid #8f8f9d;border-radius:4px"></div>
<div style="position:absolute;top:739px;font-size:16px;line-height:20px;color:#000;font-weight:normal;white-space:pre;left:552px;">Default</div>
<svg style="left:701px;top:744.5px" width="10" height="7" viewBox="0 0 10 7"><path d="M1 1.2L5 5.2L9 1.2" stroke="#15141a" stroke-width="1.6" fill="none"/></svg>
<div style="position:absolute;left:127px;top:765px;width:804px;height:34px;background:#f4f4f4"></div>
<div style="position:absolute;left:128px;top:765px;width:803px;height:1px;background:#fdfdfd"></div>
<div style="position:absolute;left:127px;top:766px;width:1px;height:33px;background:#444"></div>
<div style="position:absolute;left:128px;top:766px;width:1px;height:33px;background:#fbfbfb"></div>
<div style="position:absolute;left:930px;top:766px;width:1px;height:34px;background:#acacac"></div>
<div style="position:absolute;left:127px;top:799px;width:804px;height:1px;background:#acacac"></div>
<div style="position:absolute;left:541px;top:766px;width:1px;height:33px;background:#3a3a3a"></div>
<div style="position:absolute;left:542px;top:766px;width:1px;height:33px;background:#fdfdfd"></div>
<div style="position:absolute;top:773px;font-size:15px;line-height:20px;color:#111;font-weight:normal;white-space:pre;letter-spacing:1.415px;right:489.4px;text-align:right;">OSD Srt Set:</div>
<div style="position:absolute;left:544px;top:768px;width:173px;height:26px;background:#e9e9ed;border:1px solid #8f8f9d;border-radius:4px"></div>
<div style="position:absolute;top:774px;font-size:16px;line-height:20px;color:#000;font-weight:normal;white-space:pre;left:552px;">Open</div>
<svg style="left:701px;top:779.5px" width="10" height="7" viewBox="0 0 10 7"><path d="M1 1.2L5 5.2L9 1.2" stroke="#15141a" stroke-width="1.6" fill="none"/></svg>
<div style="position:absolute;left:127px;top:800px;width:804px;height:34px;background:#f4f4f4"></div>
<div style="position:absolute;left:128px;top:800px;width:803px;height:1px;background:#fdfdfd"></div>
<div style="position:absolute;left:127px;top:801px;width:1px;height:33px;background:#444"></div>
<div style="position:absolute;left:128px;top:801px;width:1px;height:33px;background:#fbfbfb"></div>
<div style="position:absolute;left:930px;top:801px;width:1px;height:34px;background:#acacac"></div>
<div style="position:absolute;left:127px;top:834px;width:804px;height:1px;background:#acacac"></div>
<div style="position:absolute;left:541px;top:801px;width:1px;height:33px;background:#3a3a3a"></div>
<div style="position:absolute;left:542px;top:801px;width:1px;height:33px;background:#fdfdfd"></div>
<div style="position:absolute;top:808px;font-size:15px;line-height:20px;color:#111;font-weight:normal;white-space:pre;letter-spacing:1.278px;right:489.4px;text-align:right;">Recognition Class:</div>
<div style="position:absolute;left:544px;top:803px;width:79px;height:26px;background:#e9e9ed;border:1px solid #8f8f9d;border-radius:4px"></div>
<div style="position:absolute;top:809px;font-size:16px;line-height:20px;color:#000;font-weight:normal;white-space:pre;left:552px;">Both</div>
<svg style="left:607px;top:814.5px" width="10" height="7" viewBox="0 0 10 7"><path d="M1 1.2L5 5.2L9 1.2" stroke="#15141a" stroke-width="1.6" fill="none"/></svg>
<div style="position:absolute;left:127px;top:835px;width:804px;height:29px;background:#f4f4f4"></div>
<div style="position:absolute;left:128px;top:835px;width:803px;height:1px;background:#fdfdfd"></div>
<div style="position:absolute;left:127px;top:836px;width:1px;height:28px;background:#444"></div>
<div style="position:absolute;left:128px;top:836px;width:1px;height:28px;background:#fbfbfb"></div>
<div style="position:absolute;left:930px;top:836px;width:1px;height:29px;background:#acacac"></div>
<div style="position:absolute;left:127px;top:864px;width:804px;height:1px;background:#acacac"></div>
<div style="position:absolute;left:416px;top:836px;width:223px;height:26px;background:#e9e9ed;border:1px solid #8f8f9d;border-radius:4px"></div>
<div style="position:absolute;left:416px;width:225px;text-align:center;top:841px;font-size:16.5px;line-height:20px;color:#000">Submit</div>
<div style="position:absolute;left:127px;top:865px;width:804px;height:31px;background:#e5e5e5"></div>
<div style="position:absolute;left:128px;top:865px;width:803px;height:1px;background:#fdfdfd"></div>
<div style="position:absolute;left:127px;top:866px;width:1px;height:30px;background:#444"></div>
<div style="position:absolute;left:128px;top:866px;width:1px;height:30px;background:#f6f6f6"></div>
<div style="position:absolute;left:930px;top:866px;width:1px;height:31px;background:#acacac"></div>
<div style="position:absolute;left:127px;top:896px;width:804px;height:1px;background:#acacac"></div>
<div style="position:absolute;top:871px;font-size:15px;line-height:20px;color:#111;font-weight:bold;white-space:pre;letter-spacing:1.367px;left:130.6px;">XML Upload</div>
<div style="position:absolute;left:127px;top:897px;width:804px;height:34px;background:#f4f4f4"></div>
<div style="position:absolute;left:128px;top:897px;width:803px;height:1px;background:#fdfdfd"></div>
<div style="position:absolute;left:127px;top:898px;width:1px;height:33px;background:#444"></div>
<div style="position:absolute;left:128px;top:898px;width:1px;height:33px;background:#fbfbfb"></div>
<div style="position:absolute;left:930px;top:898px;width:1px;height:34px;background:#acacac"></div>
<div style="position:absolute;left:127px;top:931px;width:804px;height:1px;background:#acacac"></div>
<div style="position:absolute;top:906px;font-size:15px;line-height:20px;color:#111;font-weight:normal;white-space:pre;letter-spacing:0.8px;left:131px;">Upload XML File:</div>
<div style="position:absolute;left:264px;top:900px;width:138px;height:26px;background:#f9f9f9;border:1px solid #b8b8c0;border-radius:2.5px"></div>
<div style="position:absolute;left:409px;top:900px;width:223px;height:26px;background:#e9e9ed;border:1px solid #8f8f9d;border-radius:4px"></div>
<div style="position:absolute;left:409px;width:225px;text-align:center;top:905px;font-size:16.5px;line-height:20px;color:#000">Browse</div>
<div style="position:absolute;left:127px;top:932px;width:804px;height:58px;background:#f4f4f4"></div>
<div style="position:absolute;left:128px;top:932px;width:803px;height:1px;background:#fdfdfd"></div>
<div style="position:absolute;left:127px;top:933px;width:1px;height:57px;background:#444"></div>
<div style="position:absolute;left:128px;top:933px;width:1px;height:57px;background:#fbfbfb"></div>
<div style="position:absolute;left:930px;top:933px;width:1px;height:58px;background:#acacac"></div>
<div style="position:absolute;left:127px;top:990px;width:804px;height:1px;background:#acacac"></div>
<div style="position:absolute;left:416px;top:933px;width:223px;height:46px;background:#e9e9ed;border:1px solid #8f8f9d;border-radius:4px"></div>
<div style="position:absolute;left:416px;width:225px;text-align:center;top:938px;font-size:16.5px;line-height:20px;color:#000">Upload XML</div>
<div style="position:absolute;left:423px;top:487px;width:208px;height:40px;border:5px solid #ec1c24;box-sizing:border-box"></div>
<div id="frame"></div></div></body></html>
